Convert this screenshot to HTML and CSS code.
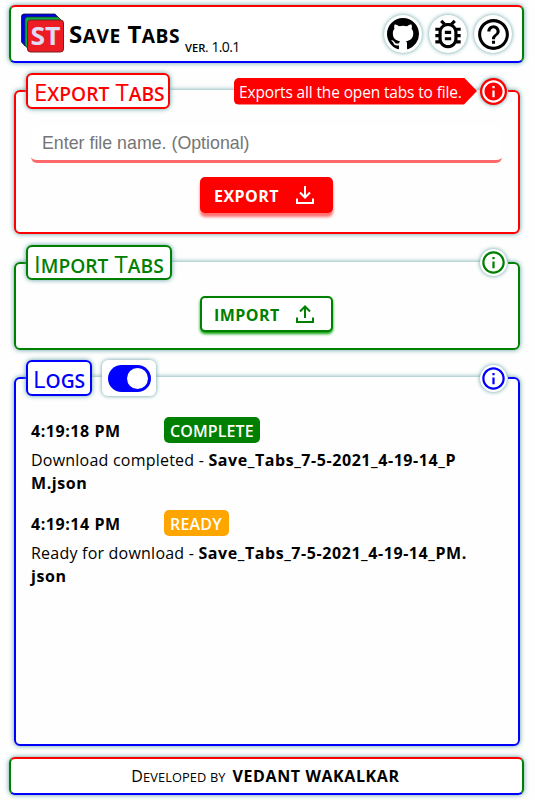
FILE: index.html
```html
<!DOCTYPE html>
<html lang="en">
<head>
<meta charset="utf-8">
<title>Save Tabs</title>
<link rel="stylesheet" href="styles.css">
</head>
<body>
<header class="bar header">
  <svg class="logo" viewBox="0 0 44 42" width="44" height="42">
    <path d="M3 1h31l4 4v28H4l-3.500-4V3.500Q.5 1 3 1z" fill="#0000e6" stroke="#113" stroke-width=".8"/>
    <path d="M6 4h31l4 4v28H7l-3-4V6.500Q4 4 6 4z" fill="#0cae45" stroke="#163b26" stroke-width=".8"/>
    <rect x="6.500" y="7" width="36" height="32" rx="3" fill="#ed1c24" stroke="#742020" stroke-width="1"/>
    <text class="logo-text" x="9.500" y="31.500" textLength="30" lengthAdjust="spacingAndGlyphs">ST</text>
  </svg>
  <h1 class="title">S<span class="sm">ave</span> T<span class="sm">abs</span></h1>
  <span class="version"><span class="sm">ver.</span> 1.0.1</span>
  <nav class="links">
    <a class="round"><svg viewBox="0 0 16 16" width="32" height="32"><path d="M8 0C3.58 0 0 3.58 0 8c0 3.54 2.29 6.53 5.47 7.59.4.07.55-.17.55-.38 0-.19-.01-.82-.01-1.49-2.01.37-2.53-.49-2.69-.94-.09-.23-.48-.94-.82-1.13-.28-.15-.68-.52-.01-.53.63-.01 1.08.58 1.23.82.72 1.21 1.87.87 2.33.66.07-.52.28-.87.51-1.07-1.78-.2-3.64-.89-3.64-3.95 0-.87.31-1.59.82-2.15-.08-.2-.36-1.02.08-2.12 0 0 .67-.21 2.2.82.64-.18 1.32-.27 2-.27s1.36.09 2 .27c1.53-1.04 2.2-.82 2.2-.82.44 1.1.16 1.92.08 2.12.51.56.82 1.27.82 2.15 0 3.07-1.87 3.75-3.65 3.95.29.25.54.73.54 1.48 0 1.07-.01 1.93-.01 2.2 0 .21.15.46.55.38A8.01 8.01 0 0 0 16 8c0-4.42-3.58-8-8-8z"/></svg></a>
    <a class="round"><svg viewBox="0 0 24 24" width="38" height="38"><path d="M20 8h-2.81c-.45-.78-1.07-1.45-1.82-1.96L17 4.41 15.59 3l-2.17 2.17C12.96 5.06 12.49 5 12 5s-.96.06-1.41.17L8.41 3 7 4.41l1.62 1.63C7.88 6.55 7.26 7.22 6.81 8H4v2h2.09c-.05.33-.09.66-.09 1v1H4v2h2v1c0 .34.04.67.09 1H4v2h2.81c1.04 1.79 2.97 3 5.19 3s4.15-1.21 5.19-3H20v-2h-2.09c.05-.33.09-.66.09-1v-1h2v-2h-2v-1c0-.34-.04-.67-.09-1H20V8zm-4 7c0 2.21-1.79 4-4 4s-4-1.79-4-4v-4c0-2.21 1.79-4 4-4s4 1.79 4 4v4zm-6-1h4v2h-4zm0-4h4v2h-4z"/></svg></a>
    <a class="round"><svg viewBox="0 0 24 24" width="37" height="37"><path d="M11 18h2v-2h-2v2zm1-16C6.48 2 2 6.48 2 12s4.48 10 10 10 10-4.48 10-10S17.52 2 12 2zm0 18c-4.41 0-8-3.59-8-8s3.59-8 8-8 8 3.59 8 8-3.59 8-8 8zm0-14c-2.21 0-4 1.79-4 4h2c0-1.1.9-2 2-2s2 .9 2 2c0 2-3 1.75-3 5h2c0-2.25 3-2.5 3-5 0-2.21-1.79-4-4-4z"/></svg></a>
  </nav>
</header>

<fieldset class="panel export">
  <legend class="legend">
    <span class="name">E<span class="sm">xport</span> T<span class="sm">abs</span></span>
    <span class="tip">Exports all the open tabs to file.</span>
    <span class="info active"><svg viewBox="0 0 24 24" width="27" height="27"><path d="M11 7h2v2h-2zm0 4h2v6h-2zm1-9C6.48 2 2 6.48 2 12s4.48 10 10 10 10-4.48 10-10S17.52 2 12 2zm0 18c-4.41 0-8-3.59-8-8s3.59-8 8-8 8 3.59 8 8-3.59 8-8 8z"/></svg></span>
  </legend>
  <input class="file" type="text" placeholder="Enter file name. (Optional)">
  <button class="button solid"><span>EXPORT</span><svg viewBox="0 0 18 18" width="18" height="18"><path d="M9 0v11M4 6.500l5 5 5-5M1 12.500V17h16v-4.500"/></svg></button>
</fieldset>

<fieldset class="panel import">
  <legend class="legend">
    <span class="name">I<span class="sm">mport</span> T<span class="sm">abs</span></span>
    <span class="info"><svg viewBox="0 0 24 24" width="27" height="27"><path d="M11 7h2v2h-2zm0 4h2v6h-2zm1-9C6.480 2 2 6.480 2 12s4.480 10 10 10 10-4.480 10-10S17.520 2 12 2zm0 18c-4.410 0-8-3.590-8-8s3.590-8 8-8 8 3.590 8 8-3.590 8-8 8z"/></svg></span>
  </legend>
  <button class="button outline"><span>IMPORT</span><svg viewBox="0 0 18 18" width="18" height="18"><path d="M9 13V2M4 6.500l5-5 5 5M1 12.500V17h16v-4.500"/></svg></button>
</fieldset>

<fieldset class="panel logs">
  <legend class="legend">
    <span class="name">L<span class="sm">ogs</span></span>
    <span class="switch"><span class="track"><span class="knob"></span></span></span>
    <span class="info"><svg viewBox="0 0 24 24" width="27" height="27"><path d="M11 7h2v2h-2zm0 4h2v6h-2zm1-9C6.480 2 2 6.480 2 12s4.480 10 10 10 10-4.480 10-10S17.520 2 12 2zm0 18c-4.410 0-8-3.590-8-8s3.590-8 8-8 8 3.590 8 8-3.590 8-8 8z"/></svg></span>
  </legend>
  <div class="entry">
    <div class="entry-head"><b class="time">4:19:18 PM</b><span class="badge complete">COMPLETE</span></div>
    <p class="message">Download completed - <b>Save_Tabs_7-5-2021_4-19-14_P<br>M.json</b></p>
  </div>
  <div class="entry">
    <div class="entry-head"><b class="time">4:19:14 PM</b><span class="badge ready">READY</span></div>
    <p class="message">Ready for download - <b>Save_Tabs_7-5-2021_4-19-14_PM.<br>json</b></p>
  </div>
</fieldset>

<footer class="bar footer"><span class="by">D<span class="sm">eveloped by</span></span><b class="author">VEDANT WAKALKAR</b></footer>
</body>
</html>
```
FILE: styles.css
```css
* { box-sizing: border-box; }
body {
  margin: 0;
  padding: 5px 11px 0 9px;
  height: 800px;
  overflow: hidden;
  background: #fefefe;
  color: #000;
  font-family: "Open Sans", "Noto Sans", sans-serif;
  font-size: 16px;
}
.sm { font-size: .8em; text-transform: uppercase; }
.bar {
  display: flex;
  align-items: center;
  border: 2px solid;
  border-color: red green blue;
  border-radius: 6px;
  background: #fff;
  box-shadow: 0 0 5px #5f9ea0;
  white-space: nowrap;
}
.header { height: 58px; padding: 0 10px; }
.logo { flex: none; margin-top: -1px; }
.logo-text { font: bold 25px "Open Sans", sans-serif; fill: #e0dcf8; }
.title { margin: 1px 0 0 4px; width: 111px; font-size: 24px; font-weight: 700; letter-spacing: .5px; line-height: 32px; }
.version { margin: 27px 0 0 5px; font-size: 14px; font-weight: 500; letter-spacing: -.65px; line-height: 20px; }
.version .sm { font-weight: 600; letter-spacing: 0; }
.links { display: flex; gap: 7px; margin-left: auto; }
.round {
  display: flex;
  align-items: center;
  justify-content: center;
  width: 38px;
  height: 38px;
  border-radius: 50%;
  background: #fff;
  box-shadow: 0 0 4px #5f9ea0;
}
.panel {
  --c: red;
  margin: 0 -5px 0 5px;
  width: 506px;
  min-width: 0;
  padding: 0 16px 0 10px;
  border: 2px solid var(--c);
  border-radius: 6px;
  box-shadow: 0 0 5px #5f9ea0;
}
.export { margin-top: 10px; height: 161px; }
.import { --c: green; margin-top: 11px; height: 105px; }
.logs { --c: blue; margin-top: 10px; height: 386px; }
.legend {
  display: flex;
  align-items: center;
  width: 482px;
  height: 36px;
  padding: 0;
  white-space: nowrap;
}
.name {
  height: 100%;
  padding: 0 6px;
  border: 2px solid var(--c);
  border-radius: 6px;
  background: #fff;
  box-shadow: 0 0 5px #5f9ea0;
  color: var(--c);
  font-size: 24px;
  font-weight: 500;
  line-height: 34px;
}
.name .sm { font-weight: 600; }
.export .name { width: 144px; }
.import .name { width: 146px; }
.import .legend { height: 35px; }
.logs .name { width: 66px; padding-left: 5px; }
.info {
  display: flex;
  align-items: center;
  justify-content: center;
  width: 27px;
  height: 27px;
  margin: 0 1px 0 auto;
  border-radius: 50%;
  background: #fff;
  box-shadow: 0 0 4px #5f9ea0;
  fill: var(--c);
}
.info.active { margin-left: 3px; background: red; fill: #fff; }
.tip {
  width: 243px;
  height: 27px;
  margin-left: auto;
  padding-left: 5px;
  border-radius: 5px 0 0 5px;
  background: red;
  clip-path: polygon(0 0, 230px 0, 100% 50%, 230px 100%, 0 100%);
  color: #fff;
  font-size: 15.5px;
  letter-spacing: -.15px;
  line-height: 29px;
}
.file {
  display: block;
  width: 471px;
  height: 37px;
  margin: 17px 0 0 5px;
  padding: 0 11px;
  border: 0 solid #ff6969;
  border-bottom-width: 3px;
  border-radius: 6px;
  background: #fff;
  font: 17.8px "Liberation Sans", Arial, sans-serif;
}
.file::placeholder { color: #757575; }
.button {
  display: flex;
  align-items: center;
  justify-content: space-between;
  width: 133px;
  height: 36px;
  margin: 14px 0 0 174px;
  padding: 1px 17px 0 12px;
  border: 2px solid var(--c);
  border-radius: 5px;
  font: 700 16px "Open Sans", "Noto Sans", sans-serif;
  letter-spacing: .45px;
  white-space: nowrap;
}
.button svg { margin-top: -2px; fill: none; stroke: currentColor; stroke-width: 2; }
.solid { background: red; color: #fff; box-shadow: 0 4px 3px #ff7070; }
.outline { margin-top: 16px; background: #fff; color: green; box-shadow: 0 2px 3px #00a000; }
.switch {
  display: flex;
  align-items: center;
  justify-content: center;
  width: 54px;
  height: 36px;
  margin-left: 10px;
  border-radius: 6px;
  background: #fff;
  box-shadow: 0 0 4px #5f9ea0;
}
.track { display: flex; justify-content: flex-end; width: 43px; height: 27px; padding: 3px; border-radius: 14px; background: blue; }
.knob { width: 21px; height: 21px; border-radius: 50%; background: #fff; }
.entry { margin: 21px 0 0 5px; white-space: nowrap; }
.entry + .entry { margin-top: 16px; }
.entry-head { display: flex; align-items: center; height: 26px; }
.time { width: 133px; padding-top: 2px; font-size: 16px; letter-spacing: .55px; }
.badge { height: 26px; padding: 0 6px; border-radius: 5px; color: #fff; font-size: 16px; font-weight: 600; line-height: 28px; }
.complete { width: 96px; background: green; letter-spacing: .1px; }
.ready { width: 65px; background: orange; letter-spacing: .2px; }
.message { margin: 6px 0 -1px; font-size: 16px; letter-spacing: .22px; line-height: 23px; }
.message b { letter-spacing: .57px; }
.footer { justify-content: center; height: 38px; margin-top: 11px; padding-right: 2px; }
.by { letter-spacing: .1px; }
.author { margin-left: 7px; letter-spacing: .6px; }
```
